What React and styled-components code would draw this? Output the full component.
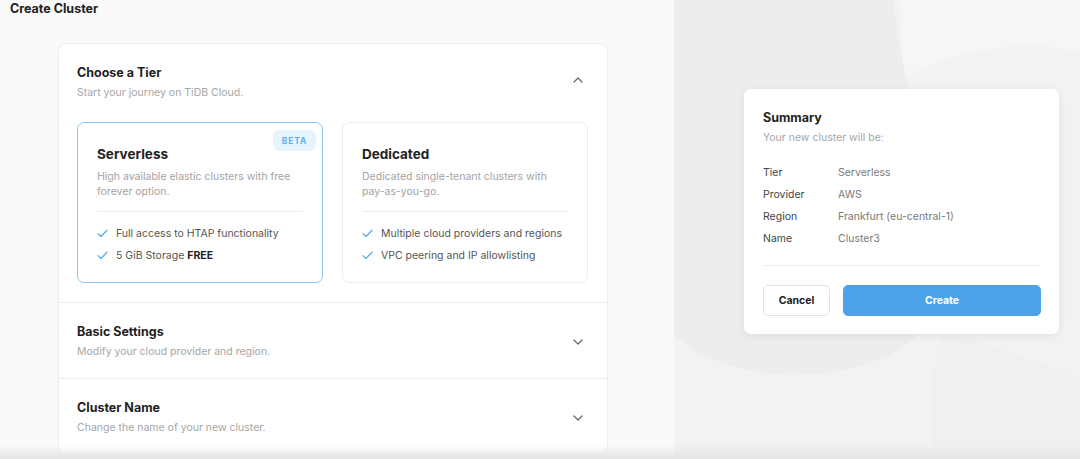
import React from 'react';
import styled, { createGlobalStyle } from 'styled-components';

const GlobalStyle = createGlobalStyle`
  html, body {
    margin: 0;
    padding: 0;
    background: #fafafa;
    font-family: Inter, "Noto Sans", "Liberation Sans", sans-serif;
    -webkit-font-smoothing: antialiased;
  }
`

const Page = styled.div`
  display: flex;
  width: 1080px;
  height: 459px;
  overflow: hidden;
  position: relative;

  &::after {
    content: '';
    position: absolute;
    left: 0;
    right: 0;
    bottom: 0;
    height: 14px;
    background: linear-gradient(to bottom, rgba(230, 230, 230, 0) 0%, rgba(226, 226, 226, 0.55) 60%, #e6e6e6 100%);
    pointer-events: none;
  }
`

const LeftColumn = styled.div`
  width: 674px;
  flex-shrink: 0;
  background: #fafafa;
`

const PageTitle = styled.h1`
  margin: 0;
  padding: 1px 0 0 10px;
  font-size: 12.5px;
  line-height: 16px;
  font-weight: 700;
  color: #222;
`

const MainCard = styled.div`
  margin: 26px 66px 0 58px;
  background: #fff;
  border: 1px solid #ececec;
  border-radius: 8px;
  overflow: hidden;
`

const Section = styled.div`
  padding: 20px 18px ${({ first }) => (first ? '19px' : '18px')} 18px;
  border-top: ${({ first }) => (first ? 'none' : '1px solid #ececec')};
`

const SectionHead = styled.div`
  display: flex;
  align-items: center;
  justify-content: space-between;
`

const HeadText = styled.div`
  display: flex;
  flex-direction: column;
`

const SectionTitle = styled.div`
  font-size: 12.5px;
  line-height: 18px;
  font-weight: 700;
  color: #1f1f1f;
`

const SectionSub = styled.div`
  margin-top: 3px;
  font-size: 10.5px;
  line-height: 16px;
  color: #a6a6a6;
`

const ChevronWrap = styled.div`
  width: 20px;
  display: flex;
  justify-content: center;
  margin-right: 1px;
  align-self: ${({ up }) => (up ? 'flex-start' : 'center')};
  margin-top: ${({ up }) => (up ? '13px' : '0')};
`

const TierGrid = styled.div`
  display: grid;
  grid-template-columns: 246px 246px;
  gap: 19px;
  margin-top: 21px;
`

const TierCard = styled.div`
  position: relative;
  height: 161px;
  box-sizing: border-box;
  padding: 21px 19px 0 19px;
  border: 1px solid ${({ active }) => (active ? '#8cc6f3' : '#ececec')};
  border-radius: 7px;
  background: #fff;
`

const Badge = styled.span`
  position: absolute;
  top: 7px;
  right: 6px;
  width: 43px;
  height: 21px;
  display: flex;
  align-items: center;
  justify-content: center;
  background: #e5f4fd;
  color: #5cb1ee;
  border-radius: 6px;
  font-size: 8.5px;
  font-weight: 700;
  letter-spacing: 0.8px;
`

const TierTitle = styled.div`
  font-size: 13.5px;
  line-height: 20px;
  font-weight: 700;
  color: #222;
`

const TierDesc = styled.div`
  margin-top: 5px;
  font-size: 10.5px;
  line-height: 15px;
  color: #a3a3a3;
  padding-right: 12px;
`

const Divider = styled.div`
  height: 1px;
  background: #ececec;
  margin: ${({ m }) => m || '12px 0 10px'};
`

const FeatureList = styled.ul`
  list-style: none;
  margin: 0;
  padding: 0;
  display: flex;
  flex-direction: column;
`

const Feature = styled.li`
  display: flex;
  align-items: center;
  gap: 8px;
  height: 22px;
  font-size: 10.5px;
  color: #555;

  b {
    color: #222;
    font-weight: 700;
    margin-left: 3px;
  }
`

const RightPanel = styled.div`
  position: relative;
  flex: 1;
  background: #f2f2f2;
  padding: 89px 21px 0 70px;
`

const Backdrop = styled.svg`
  position: absolute;
  left: 0;
  top: 0;
  width: 406px;
  height: 459px;
`

const SummaryCard = styled.div`
  position: relative;
  width: 315px;
  box-sizing: border-box;
  padding: 20px 18px 18px 19px;
  background: #fff;
  border-radius: 7px;
  box-shadow: 0 2px 10px rgba(0, 0, 0, 0.07);
`

const SummaryRows = styled.div`
  display: grid;
  grid-template-columns: 75px 1fr;
  grid-auto-rows: 22px;
  align-items: center;
  margin-top: 15px;
  font-size: 10.5px;
`

const RowLabel = styled.div`
  color: #444;
`

const RowValue = styled.div`
  color: #7a7a7a;
`

const Actions = styled.div`
  display: flex;
  gap: 13px;
`

const Button = styled.button`
  height: 31px;
  border-radius: 5px;
  font-family: inherit;
  font-size: 10.5px;
  font-weight: 700;
  cursor: pointer;
  border: 1px solid ${({ primary }) => (primary ? '#4da3ea' : '#e3e3e3')};
  background: ${({ primary }) => (primary ? '#4da3ea' : '#fff')};
  color: ${({ primary }) => (primary ? '#fff' : '#222')};
  width: ${({ w }) => w};
`

const Chevron = ({ up }) => (
  <svg width="10" height="6" viewBox="0 0 10 6">
    <path
      d={up ? 'M1 5 L5 1 L9 5' : 'M1 1 L5 5 L9 1'}
      fill="none"
      stroke="#666"
      strokeWidth="1.2"
      strokeLinecap="round"
      strokeLinejoin="round"
    />
  </svg>
)

const CheckIcon = () => (
  <svg width="11" height="9" viewBox="0 0 11 9">
    <path d="M1 4.6 L4 7.5 L10 1.2" fill="none" stroke="#5aaeed" strokeWidth="1.3" strokeLinecap="round" strokeLinejoin="round" />
  </svg>
)

const tiers = [
  {
    name: 'Serverless',
    desc: 'High available elastic clusters with free forever option.',
    features: [['Full access to HTAP functionality'], ['5 GiB Storage', 'FREE']],
    active: true,
    badge: 'BETA',
  },
  {
    name: 'Dedicated',
    desc: 'Dedicated single-tenant clusters with pay-as-you-go.',
    features: [['Multiple cloud providers and regions'], ['VPC peering and IP allowlisting']],
  },
]

const summary = [
  ['Tier', 'Serverless'],
  ['Provider', 'AWS'],
  ['Region', 'Frankfurt (eu-central-1)'],
  ['Name', 'Cluster3'],
]

const App = () => {
  return (
    <Page>
      <GlobalStyle />
      <LeftColumn>
        <PageTitle>Create Cluster</PageTitle>
        <MainCard>
          <Section first>
            <SectionHead>
              <HeadText>
                <SectionTitle>Choose a Tier</SectionTitle>
                <SectionSub>Start your journey on TiDB Cloud.</SectionSub>
              </HeadText>
              <ChevronWrap up><Chevron up /></ChevronWrap>
            </SectionHead>
            <TierGrid>
              {tiers.map(t => (
                <TierCard key={t.name} active={t.active}>
                  {t.badge && <Badge>{t.badge}</Badge>}
                  <TierTitle>{t.name}</TierTitle>
                  <TierDesc>{t.desc}</TierDesc>
                  <Divider />
                  <FeatureList>
                    {t.features.map(([text, strong]) => (
                      <Feature key={text}>
                        <CheckIcon />
                        <span>{text}{strong && <b>{strong}</b>}</span>
                      </Feature>
                    ))}
                  </FeatureList>
                </TierCard>
              ))}
            </TierGrid>
          </Section>
          <Section>
            <SectionHead>
              <HeadText>
                <SectionTitle>Basic Settings</SectionTitle>
                <SectionSub>Modify your cloud provider and region.</SectionSub>
              </HeadText>
              <ChevronWrap><Chevron /></ChevronWrap>
            </SectionHead>
          </Section>
          <Section>
            <SectionHead>
              <HeadText>
                <SectionTitle>Cluster Name</SectionTitle>
                <SectionSub>Change the name of your new cluster.</SectionSub>
              </HeadText>
              <ChevronWrap><Chevron /></ChevronWrap>
            </SectionHead>
          </Section>
        </MainCard>
      </LeftColumn>

      <RightPanel>
        <Backdrop viewBox="0 0 406 459">
          <path d="M226 0 H406 V52 C360 40 290 45 229 78 Z" fill="#f6f6f6" />
          <path d="M0 0 H219 C231 110 286 260 256 320 C216 385 66 395 0 335 Z" fill="#ededed" />
          <path d="M262 459 C252 410 258 360 270 330 C320 345 370 365 406 378 V459 Z" fill="#f0f0f0" />
        </Backdrop>
        <SummaryCard>
          <SectionTitle>Summary</SectionTitle>
          <SectionSub>Your new cluster will be:</SectionSub>
          <SummaryRows>
            {summary.map(([label, value]) => (
              <React.Fragment key={label}>
                <RowLabel>{label}</RowLabel>
                <RowValue>{value}</RowValue>
              </React.Fragment>
            ))}
          </SummaryRows>
          <Divider m="16px 0 19px" />
          <Actions>
            <Button w="67px">Cancel</Button>
            <Button primary w="198px">Create</Button>
          </Actions>
        </SummaryCard>
      </RightPanel>
    </Page>
  );
}

export default App;
